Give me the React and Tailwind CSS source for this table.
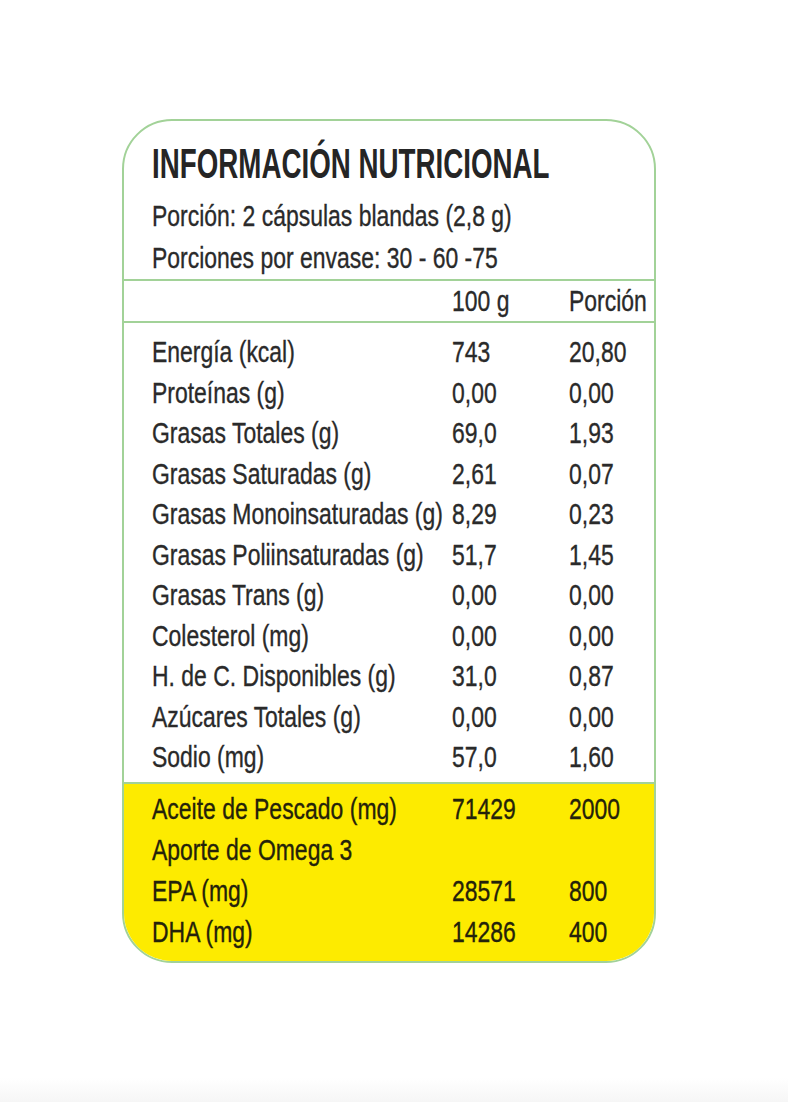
import React from "react";

const rows = [
  ["Energía (kcal)", "743", "20,80"],
  ["Proteínas (g)", "0,00", "0,00"],
  ["Grasas Totales (g)", "69,0", "1,93"],
  ["Grasas Saturadas (g)", "2,61", "0,07"],
  ["Grasas Monoinsaturadas (g)", "8,29", "0,23"],
  ["Grasas Poliinsaturadas (g)", "51,7", "1,45"],
  ["Grasas Trans (g)", "0,00", "0,00"],
  ["Colesterol (mg)", "0,00", "0,00"],
  ["H. de C. Disponibles (g)", "31,0", "0,87"],
  ["Azúcares Totales (g)", "0,00", "0,00"],
  ["Sodio (mg)", "57,0", "1,60"],
];

const yellowRows = [
  ["Aceite de Pescado (mg)", "71429", "2000"],
  ["Aporte de Omega 3", "", ""],
  ["EPA (mg)", "28571", "800"],
  ["DHA (mg)", "14286", "400"],
];

const font = { fontFamily: '"Liberation Sans", Arial, sans-serif' };

function T({ children }) {
  return (
    <span className="inline-block origin-left scale-x-[0.765] whitespace-nowrap [-webkit-text-stroke:0.35px_currentColor]">
      {children}
    </span>
  );
}

export default function App() {
  return (
    <div className="w-[788px] h-[1102px] bg-white flex flex-col" style={font}>
      <div className="flex-1 pt-[119px] pl-[122px]">
        <div className="w-[534px] h-[844px] border-2 border-[#a2d298] rounded-[50px] overflow-hidden flex flex-col text-[#2a2a2a]">
          <div className="pl-[28px] pt-[20px]">
            <div className="text-[43px] leading-[44px] font-bold text-[#252525] whitespace-nowrap">
              <span className="inline-block origin-left scale-x-[0.645]">INFORMACIÓN NUTRICIONAL</span>
            </div>
            <div className="mt-[10px] text-[30px] leading-[42px]"><T>Porción: 2 cápsulas blandas (2,8 g)</T></div>
            <div className="text-[30px] leading-[42px]"><T>Porciones por envase: 30 - 60 -75</T></div>
          </div>
          <div className="border-t-2 border-[#a2d298]" />
          <div className="grid grid-cols-[300px_117px_1fr] pl-[28px] h-[40px] items-center text-[30px] leading-[40px]">
            <div />
            <div><T>100 g</T></div>
            <div><T>Porción</T></div>
          </div>
          <div className="border-t-2 border-[#a2d298]" />
          <div className="pt-[9px] pb-[4px] pl-[28px] text-[30px]">
            {rows.map((r) => (
              <div key={r[0]} className="grid grid-cols-[300px_117px_1fr] h-[40.5px] leading-[40.5px]">
                <div><T>{r[0]}</T></div>
                <div><T>{r[1]}</T></div>
                <div><T>{r[2]}</T></div>
              </div>
            ))}
          </div>
          <div className="flex-1 bg-[#fdeb00] border-t-2 border-[#a2d298] pt-[4px] pl-[28px] text-[30px] text-[#24220a]">
            {yellowRows.map((r) => (
              <div key={r[0]} className="grid grid-cols-[300px_117px_1fr] h-[41px] leading-[41px]">
                <div><T>{r[0]}</T></div>
                <div><T>{r[1]}</T></div>
                <div><T>{r[2]}</T></div>
              </div>
            ))}
          </div>
        </div>
      </div>
      <div className="h-[24px] bg-gradient-to-b from-white to-[#f6f6f6]" />
    </div>
  );
}
